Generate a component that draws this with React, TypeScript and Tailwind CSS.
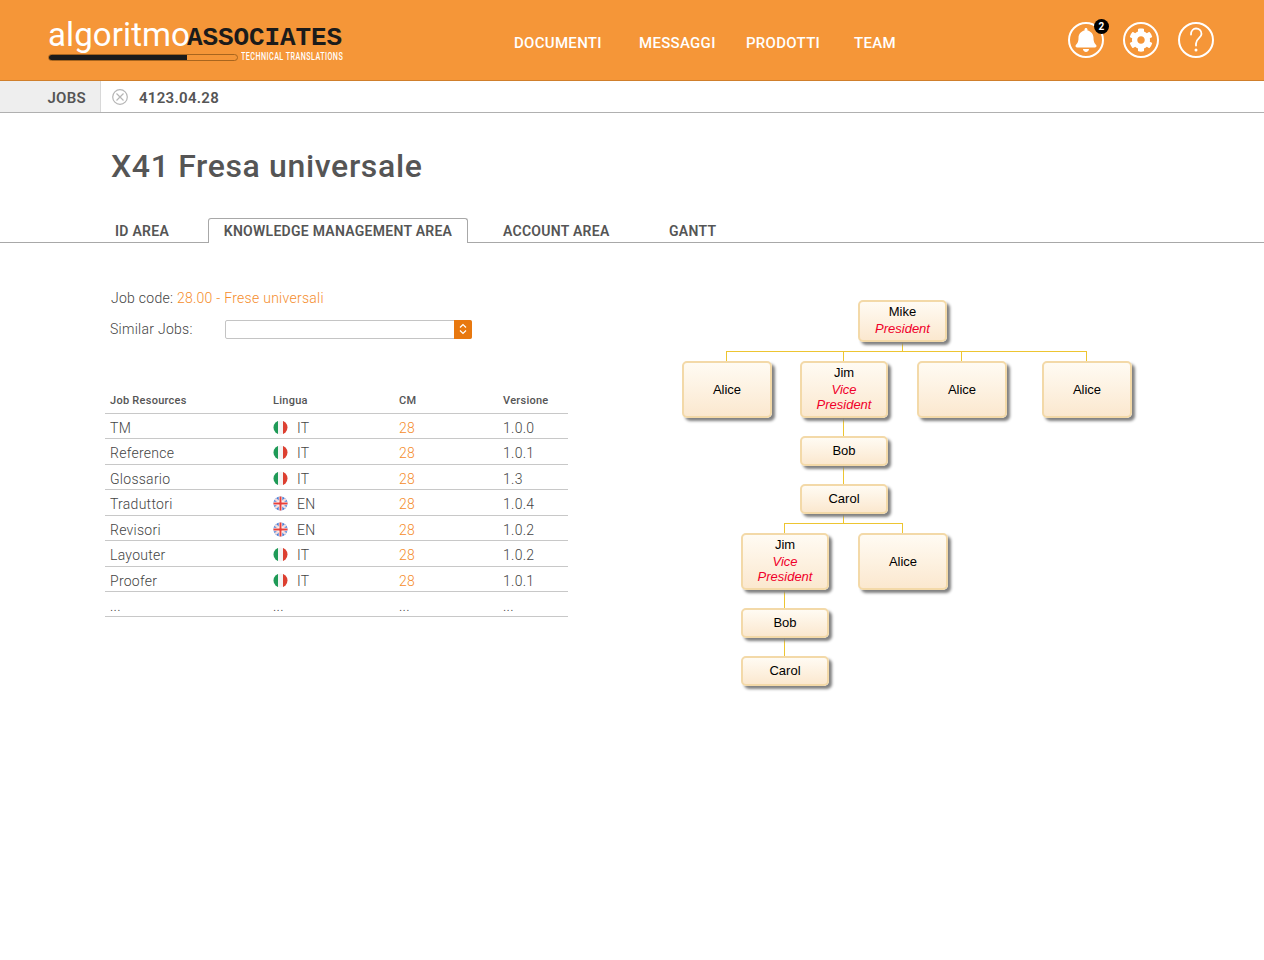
import React from "react";
import { FaBell, FaCog } from "react-icons/fa";

const roboto = "font-['Roboto',sans-serif]";

function Flag({ en }: { en?: boolean }) {
  if (en) {
    return (
      <svg width="15" height="15" viewBox="0 0 15 15" className="shrink-0">
        <defs>
          <clipPath id="ukclip"><circle cx="7.5" cy="7.5" r="7" /></clipPath>
        </defs>
        <g clipPath="url(#ukclip)">
          <rect width="15" height="15" fill="#4a7fd6" />
          <path d="M0 1 L15 14 M15 1 L0 14" stroke="#f4dcdc" strokeWidth="2.4" />
          <path d="M7.5 0 V15 M0 7.5 H15" stroke="#fff" strokeWidth="3.6" />
          <path d="M7.5 0 V15 M0 7.5 H15" stroke="#e8403a" strokeWidth="2" />
        </g>
      </svg>
    );
  }
  return (
    <svg width="15" height="15" viewBox="0 0 15 15" className="shrink-0">
      <defs>
        <clipPath id="itclip"><circle cx="7.5" cy="7.5" r="7" /></clipPath>
      </defs>
      <g clipPath="url(#itclip)">
        <rect width="5" height="15" fill="#1f9a57" />
        <rect x="5" width="5" height="15" fill="#f4f4f4" />
        <rect x="10" width="5" height="15" fill="#dc3f30" />
      </g>
    </svg>
  );
}

const rows: [string, string, string, string][] = [
  ["TM", "IT", "28", "1.0.0"],
  ["Reference", "IT", "28", "1.0.1"],
  ["Glossario", "IT", "28", "1.3"],
  ["Traduttori", "EN", "28", "1.0.4"],
  ["Revisori", "EN", "28", "1.0.2"],
  ["Layouter", "IT", "28", "1.0.2"],
  ["Proofer", "IT", "28", "1.0.1"],
];

function Node({ x, y, w, h, name, title }: { x: number; y: number; w: number; h: number; name: string; title?: string }) {
  const pad = title ? "pb-[3px]" : h < 40 ? "pb-[2px]" : "";
  return (
    <div
      className={`absolute flex flex-col items-center justify-center rounded-[5px] border-2 border-[#f3d9a8] bg-gradient-to-b from-[#fffbf3] to-[#fbe8cf] text-center text-[13px] leading-[15px] text-black shadow-[3px_3px_3px_#808080] font-['Liberation_Sans',sans-serif] ${pad}`}
      style={{ left: x, top: y, width: w, height: h }}
    >
      <span className={title ? "mb-[2px]" : ""}>{name}</span>
      {title && <span className="w-[70px] italic text-[#f0002a]">{title}</span>}
    </div>
  );
}

function HLine({ x, y, w }: { x: number; y: number; w: number }) {
  return <div className="absolute h-px bg-[#edc531]" style={{ left: x, top: y, width: w }} />;
}
function VLine({ x, y, h }: { x: number; y: number; h: number }) {
  return <div className="absolute w-px bg-[#edc531]" style={{ left: x, top: y, height: h }} />;
}

function Chart() {
  return (
    <div className="relative h-full w-full">
      <HLine x={726} y={351} w={361} />
      <VLine x={726} y={351} h={10} />
      <VLine x={843} y={351} h={10} />
      <VLine x={902} y={342} h={10} />
      <VLine x={961} y={351} h={10} />
      <VLine x={1086} y={351} h={10} />
      <VLine x={843} y={418} h={18} />
      <VLine x={843} y={466} h={18} />
      <VLine x={843} y={514} h={10} />
      <HLine x={784} y={523} w={119} />
      <VLine x={784} y={523} h={10} />
      <VLine x={902} y={523} h={10} />
      <VLine x={784} y={590} h={18} />
      <VLine x={784} y={638} h={18} />
      <Node x={858} y={300} w={89} h={42} name="Mike" title="President" />
      <Node x={682} y={361} w={90} h={57} name="Alice" />
      <Node x={800} y={361} w={88} h={57} name="Jim" title="Vice President" />
      <Node x={917} y={361} w={90} h={57} name="Alice" />
      <Node x={1042} y={361} w={90} h={57} name="Alice" />
      <Node x={800} y={436} w={88} h={30} name="Bob" />
      <Node x={800} y={484} w={88} h={30} name="Carol" />
      <Node x={741} y={533} w={88} h={57} name="Jim" title="Vice President" />
      <Node x={858} y={533} w={90} h={57} name="Alice" />
      <Node x={741} y={608} w={88} h={30} name="Bob" />
      <Node x={741} y={656} w={88} h={30} name="Carol" />
    </div>
  );
}

function Logo() {
  return (
    <div className="ml-[48px] flex h-[60px] w-[294px] shrink-0 flex-col pt-[10px]">
      <div className="flex h-[30px] items-end whitespace-nowrap leading-none">
        <span className="w-[139px] shrink-0 font-['Roboto',sans-serif] text-[33px] font-normal leading-[30px] tracking-[0.1px] text-white">algoritmo</span>
        <span className="font-['Liberation_Mono',monospace] text-[26px] font-bold leading-[24px] tracking-[-0.1px] text-[#1b1b1b]">ASSOCIATES</span>
      </div>
      <div className="mt-[2px] flex items-center whitespace-nowrap">
        <div className="flex h-[7px] w-[190px] shrink-0 overflow-hidden rounded-full border border-[#a8651e]">
          <div className="h-full w-[138px] bg-[#1b1b1b]" />
        </div>
        <span className="ml-[3px] origin-left scale-x-[0.72] font-['Roboto',sans-serif] text-[10px] font-medium leading-none tracking-[0.6px] text-white">TECHNICAL TRANSLATIONS</span>
      </div>
    </div>
  );
}

export default function App() {
  return (
    <div className={`relative h-[960px] w-[1264px] overflow-hidden bg-white ${roboto}`}>
      <header className="flex h-[81px] items-center border-b border-[#d07f2c] bg-[#f59638]">
        <Logo />
        <nav className="ml-[172px] flex pt-[7px] text-[15px] font-medium tracking-[0.3px] text-white">
          <a className="w-[125px]">DOCUMENTI</a>
          <a className="w-[107px]">MESSAGGI</a>
          <a className="w-[108px]">PRODOTTI</a>
          <a>TEAM</a>
        </nav>
        <div className="ml-[172px] flex items-center gap-[19px]">
          <div className="relative flex h-[36px] w-[36px] items-center justify-center rounded-full border-2 border-white text-white">
            <FaBell size={24} />
            <span className="absolute -right-[7px] -top-[5px] flex h-[15px] w-[15px] items-center justify-center rounded-full bg-black text-[10px] font-bold text-white">2</span>
          </div>
          <div className="flex h-[36px] w-[36px] items-center justify-center rounded-full border-2 border-white text-white">
            <FaCog size={24} />
          </div>
          <div className="flex h-[36px] w-[36px] items-center justify-center rounded-full border-2 border-white text-white">
            <svg width="14" height="26" viewBox="0 0 14 26" fill="none" stroke="white" strokeWidth="1.8" strokeLinecap="round">
              <path d="M2 7.5 C2 3.5 4.5 1.5 7 1.5 C10 1.5 12.5 3.5 12.5 7 C12.5 11 7 11.5 7 16.5 V18.5" />
              <circle cx="7" cy="23" r="1.5" fill="white" stroke="none" />
            </svg>
          </div>
        </div>
      </header>

      <div className="flex h-[32px] items-center border-b border-[#b0b0b0]">
        <div className="flex h-full w-[101px] items-center justify-end border-r border-[#d8d8d8] bg-[#eeeeee] pr-[14px] pt-[3px] text-[15px] font-semibold tracking-[0.3px] text-[#555]">JOBS</div>
        <svg className="ml-[11px]" width="16" height="16" viewBox="0 0 16 16" fill="none" stroke="#b5b5b5" strokeWidth="1.2">
          <circle cx="8" cy="8" r="7.3" />
          <path d="M4.5 4.5 L11.5 11.5 M11.5 4.5 L4.5 11.5" />
        </svg>
        <span className="ml-[11px] pt-[3px] text-[15px] font-semibold tracking-[0.3px] text-[#555]">4123.04.28</span>
      </div>

      <h1 className="ml-[111px] mt-[34px] text-[32px] font-medium leading-[38px] tracking-[0.65px] text-[#555]">X41 Fresa universale</h1>

      <div className="mt-[33px] flex h-[25px] items-end border-b border-[#a8a8a8] text-[14px] font-semibold leading-none tracking-[0.27px] text-[#555]">
        <span className="mb-[4px] ml-[115px] w-[93px]">ID AREA</span>
        <span className="relative -mb-px flex h-[25px] w-[260px] items-center justify-center rounded-t-[3px] border border-b-0 border-[#a8a8a8] bg-white">KNOWLEDGE MANAGEMENT AREA</span>
        <span className="mb-[4px] ml-[35px] w-[166px]">ACCOUNT AREA</span>
        <span className="mb-[4px]">GANTT</span>
      </div>

      <section className="ml-[105px] mt-[47px] w-[463px] text-[14px] font-light tracking-[0.27px] text-[#444]">
        <p className="ml-[6px] leading-[17px]">Job code: <span className="text-[#f58d2c]">28.00 - Frese universali</span></p>
        <div className="mt-[12px] flex h-[20px] items-center">
          <span className="ml-[5px] w-[115px]">Similar Jobs:</span>
          <div className="flex h-[19px] w-[247px] rounded-[2px] border border-[#c4c4c4]">
            <div className="flex-1" />
            <div className="-my-px -mr-px flex h-[19px] w-[18px] items-center justify-center rounded-r-[2px] bg-[#e8780f]">
              <svg width="8" height="12" viewBox="0 0 8 12" fill="none" stroke="white" strokeWidth="1.2">
                <path d="M1 4.5 L4 1.5 L7 4.5 M1 7.5 L4 10.5 L7 7.5" />
              </svg>
            </div>
          </div>
        </div>

        <table className="mt-[50px] w-[463px] table-fixed border-collapse text-[14px] leading-[20px]">
          <colgroup>
            <col className="w-[168px]" />
            <col className="w-[126px]" />
            <col className="w-[104px]" />
            <col />
          </colgroup>
          <thead>
            <tr className="h-[24px] border-b border-[#c8c8c8] text-left text-[11px] font-medium text-[#555]">
              <th className="pl-[5px] font-medium">Job Resources</th>
              <th className="font-medium">Lingua</th>
              <th className="font-medium">CM</th>
              <th className="font-medium">Versione</th>
            </tr>
          </thead>
          <tbody>
            {rows.map((r) => (
              <tr key={r[0]} className="h-[25.5px] border-b border-[#c8c8c8] font-light">
                <td className="pl-[5px] pt-[4px]">{r[0]}</td>
                <td className="pt-[3px]">
                  <span className="flex items-center gap-[9px]"><Flag en={r[1] === "EN"} /><span className="pt-px">{r[1]}</span></span>
                </td>
                <td className="pt-[4px] text-[#f58d2c]">{r[2]}</td>
                <td className="pt-[4px]">{r[3]}</td>
              </tr>
            ))}
            <tr className="h-[25px] border-b border-[#c8c8c8] font-light">
              <td className="pl-[5px] pt-[3px]">...</td>
              <td className="pt-[3px]">...</td>
              <td className="pt-[3px]">...</td>
              <td className="pt-[3px]">...</td>
            </tr>
          </tbody>
        </table>
      </section>

      <div className="pointer-events-none absolute inset-0">
        <Chart />
      </div>
    </div>
  );
}
